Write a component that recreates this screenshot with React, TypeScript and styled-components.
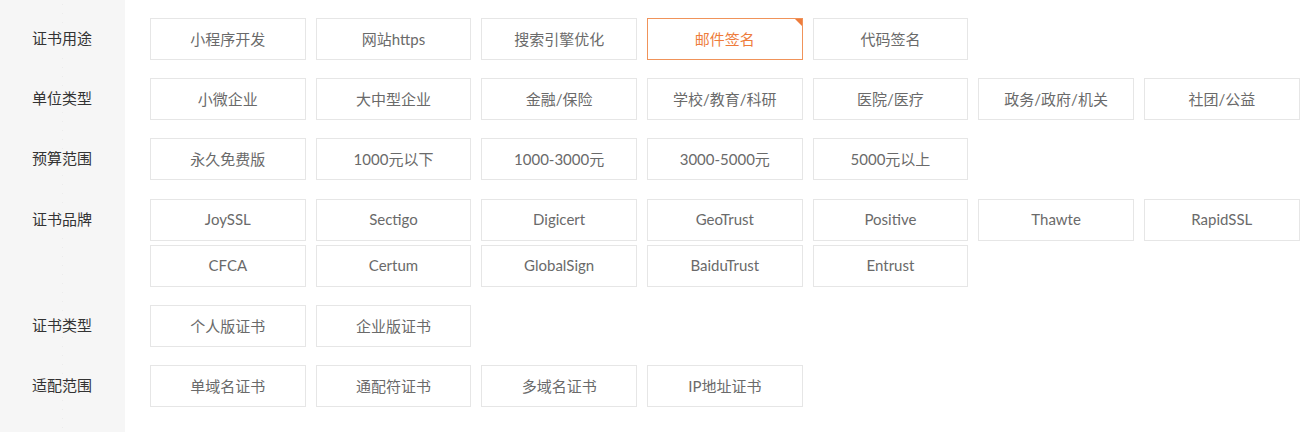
import { Fragment } from 'react';
import styled, { createGlobalStyle, css } from 'styled-components';

const GlobalStyle = createGlobalStyle`
  html, body {
    margin: 0;
    padding: 0;
    background: #fff;
  }
  body {
    font-family: Lato, "Noto Sans CJK SC", sans-serif;
  }
`;

const SIDE = 125;

const Page = styled.div`
  min-height: 432px;
  display: grid;
  grid-template-columns: ${SIDE}px 1fr;
  align-content: start;
  background:
    radial-gradient(circle, rgba(0, 0, 0, 0.04) 0.6px, transparent 1px),
    linear-gradient(to right, #f6f6f6 ${SIDE}px, #fff ${SIDE}px);
  background-repeat: repeat-y, no-repeat;
  background-size: ${SIDE}px 9px, 100% 100%;
  padding-top: 18px;
  row-gap: 18.2px;
`;

const Label = styled.div`
  height: 42px;
  line-height: 41px;
  text-align: center;
  font-size: 15px;
  color: #333;
  padding-right: 1px;
`;

const Options = styled.div`
  display: flex;
  flex-wrap: wrap;
  gap: 4.5px 10px;
  padding-left: 25px;
`;

const Option = styled.div<{ $active?: boolean }>`
  position: relative;
  box-sizing: border-box;
  width: 155.67px;
  height: 42px;
  padding-bottom: 2px;
  border: 1px solid #e6e6e6;
  display: flex;
  align-items: center;
  justify-content: center;
  font-size: 15px;
  color: #6a6a6a;
  background: #fff;
  cursor: pointer;
  ${({ $active }) =>
    $active &&
    css`
      border-color: #f0935a;
      color: #ee7c3c;
      &::after {
        content: '';
        position: absolute;
        top: 0;
        right: 0;
        border-style: solid;
        border-width: 0 7px 7px 0;
        border-color: transparent #ee7c3c transparent transparent;
      }
    `}
`;

const groups: { label: string; items: string[]; active?: string }[] = [
  { label: '证书用途', items: ['小程序开发', '网站https', '搜索引擎优化', '邮件签名', '代码签名'], active: '邮件签名' },
  { label: '单位类型', items: ['小微企业', '大中型企业', '金融/保险', '学校/教育/科研', '医院/医疗', '政务/政府/机关', '社团/公益'] },
  { label: '预算范围', items: ['永久免费版', '1000元以下', '1000-3000元', '3000-5000元', '5000元以上'] },
  {
    label: '证书品牌',
    items: ['JoySSL', 'Sectigo', 'Digicert', 'GeoTrust', 'Positive', 'Thawte', 'RapidSSL', 'CFCA', 'Certum', 'GlobalSign', 'BaiduTrust', 'Entrust'],
  },
  { label: '证书类型', items: ['个人版证书', '企业版证书'] },
  { label: '适配范围', items: ['单域名证书', '通配符证书', '多域名证书', 'IP地址证书'] },
];

export default function App() {
  return (
    <>
      <GlobalStyle />
      <Page>
        {groups.map((g) => (
          <Fragment key={g.label}>
            <Label>{g.label}</Label>
            <Options>
              {g.items.map((it) => (
                <Option key={it} $active={it === g.active}>
                  {it}
                </Option>
              ))}
            </Options>
          </Fragment>
        ))}
      </Page>
    </>
  );
}
